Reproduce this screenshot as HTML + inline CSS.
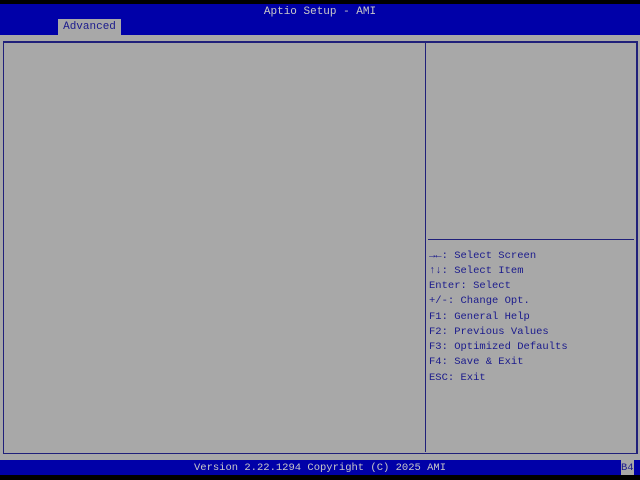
<!DOCTYPE html><html><head><style>
body{margin:0;width:640px;height:480px;background:#000;position:relative;overflow:hidden;font-family:"Liberation Mono","DejaVu Sans Mono",monospace;font-size:10.5px}
div{position:absolute}
.t{color:#1a1a8c;white-space:pre;left:429px}
</style></head><body>
<div style="left:0;top:4px;width:640px;height:31px;background:#0000a8"></div>
<div style="left:0;top:6px;width:640px;text-align:center;color:#c8c8c8;font-size:11px">Aptio Setup - AMI</div>
<div style="left:58px;top:19px;width:63px;height:16px;background:#a8a8a8;color:#1a1a8c;text-align:center;line-height:17px;font-size:11px">Advanced</div>
<div style="left:0;top:35px;width:640px;height:425px;background:#a8a8a8"></div>
<div style="left:3px;top:41px;width:632px;height:410px;border:1px solid #20207a;border-width:2px 2px 1px 1px"></div>
<div style="left:425px;top:42px;width:1px;height:410px;background:#20207a"></div>
<div style="left:428px;top:239px;width:206px;height:1px;background:#20207a"></div>
<div class="t" style="top:250px">→←: Select Screen</div>
<div class="t" style="top:265px">↑↓: Select Item</div>
<div class="t" style="top:280px">Enter: Select</div>
<div class="t" style="top:295px">+/-: Change Opt.</div>
<div class="t" style="top:311px">F1: General Help</div>
<div class="t" style="top:326px">F2: Previous Values</div>
<div class="t" style="top:341px">F3: Optimized Defaults</div>
<div class="t" style="top:356px">F4: Save &amp; Exit</div>
<div class="t" style="top:372px">ESC: Exit</div>
<div style="left:0;top:460px;width:640px;height:15px;background:#0000a8"></div>
<div style="left:0;top:461px;width:640px;text-align:center;color:#c8c8c8;line-height:15px">Version 2.22.1294 Copyright (C) 2025 AMI</div>
<div style="left:621px;top:460px;width:13px;height:15px;background:#a8a8a8;color:#1a1a8c;line-height:16px">B4</div>
</body></html>
